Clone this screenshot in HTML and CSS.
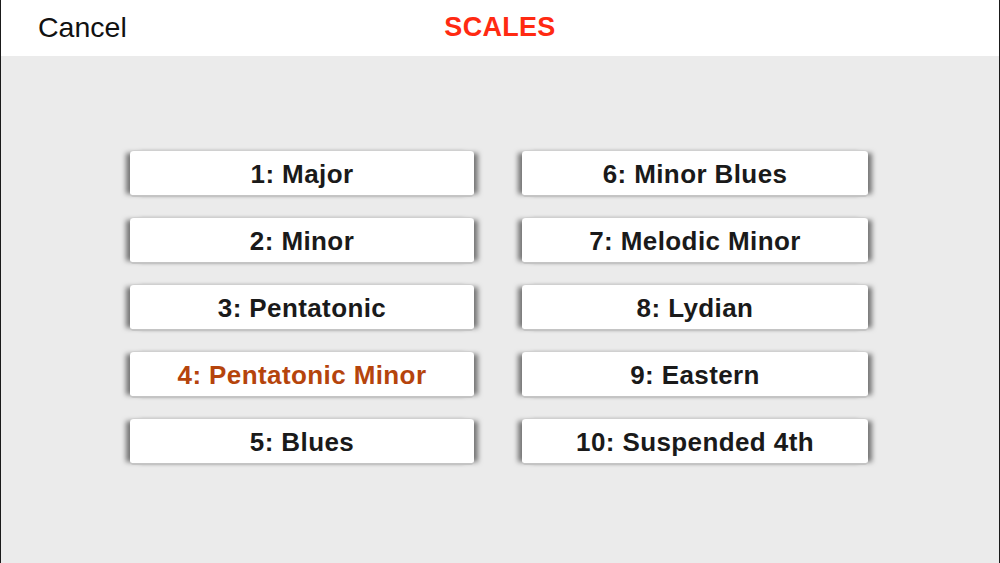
FILE: index.html
```html
<!DOCTYPE html>
<html>
<head>
<meta charset="utf-8">
<link rel="stylesheet" href="styles.css">
</head>
<body>
<div class="screen">
  <header class="header">
    <span class="cancel">Cancel</span>
    <span class="title">SCALES</span>
  </header>
  <main class="content">
    <div class="grid">
      <div class="btn">1: Major</div>
      <div class="btn">6: Minor Blues</div>
      <div class="btn">2: Minor</div>
      <div class="btn">7: Melodic Minor</div>
      <div class="btn">3: Pentatonic</div>
      <div class="btn">8: Lydian</div>
      <div class="btn selected">4: Pentatonic Minor</div>
      <div class="btn">9: Eastern</div>
      <div class="btn">5: Blues</div>
      <div class="btn">10: Suspended 4th</div>
    </div>
  </main>
</div>
</body>
</html>
```
FILE: styles.css
```css
html, body {
  margin: 0;
  padding: 0;
}
body {
  width: 1000px;
  height: 563px;
  overflow: hidden;
  font-family: "Liberation Sans", Arial, sans-serif;
}
.screen {
  width: 1000px;
  height: 563px;
  box-sizing: border-box;
  border-left: 1px solid #1a1a1a;
  border-right: 1px solid #1a1a1a;
  background: #ebebeb;
  display: flex;
  flex-direction: column;
}
.header {
  height: 56px;
  background: #ffffff;
  position: relative;
  display: flex;
  align-items: center;
  justify-content: center;
}
.cancel {
  position: absolute;
  left: 37px;
  top: 11px;
  font-size: 28.5px;
  color: #111;
}
.title {
  font-size: 27px;
  font-weight: bold;
  color: #ff2a12;
  letter-spacing: 0.3px;
  margin-top: -1px;
}
.content {
  flex: 1;
  padding-top: 94px;
}
.grid {
  display: grid;
  grid-template-columns: 344px 346px;
  column-gap: 48px;
  grid-auto-rows: 47px;
  row-gap: 20px;
  justify-content: center;
  margin-left: -2px;
}
.btn {
  box-sizing: border-box;
  background: #ffffff;
  border-top: 1px solid #d0d0d0;
  border-bottom: 2px solid #c4c4c4;
  border-radius: 4px;
  box-shadow: -7px 0 5px -3px rgba(0,0,0,0.5), 7px 0 5px -3px rgba(0,0,0,0.5);
  display: flex;
  align-items: center;
  justify-content: center;
  padding-top: 2px;
  font-size: 26px;
  letter-spacing: 0.4px;
  font-weight: bold;
  color: #1a1a1a;
}
.btn.selected {
  color: #b5440c;
}
```
